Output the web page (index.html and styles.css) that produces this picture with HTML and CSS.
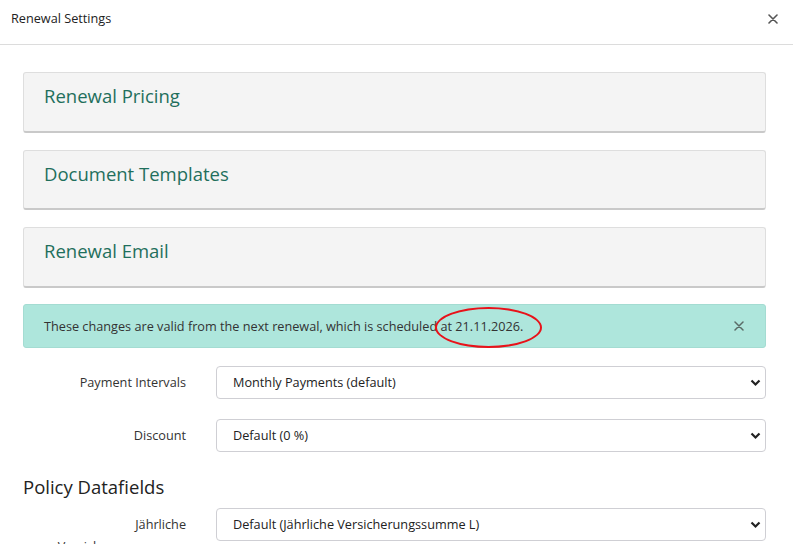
FILE: index.html
```html
<!DOCTYPE html>
<html lang="en">
<head>
<meta charset="utf-8">
<title>Renewal Settings</title>
<link rel="stylesheet" href="styles.css">
</head>
<body>
<div class="modal">
  <header class="modal-header">
    <span class="modal-title">Renewal Settings</span>
    <button class="close" aria-label="Close">
      <svg width="10" height="10" viewBox="0 0 10 10"><path d="M1 1L9 9M9 1L1 9" stroke="#555" stroke-width="1.6" stroke-linecap="round"/></svg>
    </button>
  </header>
  <main class="modal-body">
    <section class="panel"><h2 class="panel-title">Renewal Pricing</h2></section>
    <section class="panel"><h2 class="panel-title">Document Templates</h2></section>
    <section class="panel"><h2 class="panel-title">Renewal Email</h2></section>

    <div class="alert">
      <span class="alert-text">These changes are valid from the next renewal, which is scheduled at 21.11.2026.</span>
      <button class="alert-close" aria-label="Close">
        <svg width="10" height="10" viewBox="0 0 10 10"><path d="M1 1L9 9M9 1L1 9" stroke="#5a6b67" stroke-width="1.5" stroke-linecap="round"/></svg>
      </button>
      <span class="mark"></span>
    </div>

    <div class="form-row">
      <label class="form-label">Payment Intervals</label>
      <div class="select-wrap">
        <select class="select"><option>Monthly Payments (default)</option></select>
        <svg class="chev" width="11" height="8" viewBox="0 0 11 8"><path d="M1.5 1.5L5.5 5.5L9.5 1.5" fill="none" stroke="#222" stroke-width="2.2"/></svg>
      </div>
    </div>
    <div class="form-row">
      <label class="form-label">Discount</label>
      <div class="select-wrap">
        <select class="select"><option>Default (0 %)</option></select>
        <svg class="chev" width="11" height="8" viewBox="0 0 11 8"><path d="M1.5 1.5L5.5 5.5L9.5 1.5" fill="none" stroke="#222" stroke-width="2.2"/></svg>
      </div>
    </div>

    <h3 class="section-title">Policy Datafields</h3>

    <div class="form-row">
      <label class="form-label">Jährliche Versicherungssumme</label>
      <div class="select-wrap">
        <select class="select"><option>Default (Jährliche Versicherungssumme L)</option></select>
        <svg class="chev" width="11" height="8" viewBox="0 0 11 8"><path d="M1.5 1.5L5.5 5.5L9.5 1.5" fill="none" stroke="#222" stroke-width="2.2"/></svg>
      </div>
    </div>
  </main>
</div>
</body>
</html>
```
FILE: styles.css
```css
* { box-sizing: border-box; }
html, body { margin: 0; padding: 0; background: #fff; }
body {
  font-family: "Open Sans", "DejaVu Sans", sans-serif;
  font-size: 12.7px;
  color: #333;
  overflow: hidden;
  height: 544px;
}
.modal { width: 793px; }
.modal-header {
  height: 45px;
  border-bottom: 1px solid #dcdcdc;
  display: flex;
  align-items: center;
  justify-content: space-between;
  padding: 0 15px 0 11px;
}
.modal-title { font-size: 12.7px; color: #222; margin-top: -8px; }
.close, .alert-close {
  background: none; border: 0; padding: 0; cursor: pointer;
  display: flex; align-items: center; justify-content: center;
}
.close { margin-top: -7px; }
.modal-body { padding: 27px 27px 0 23px; }
.panel {
  background: #f4f4f4;
  border: 1px solid #dedede;
  border-bottom: 2px solid #c9c9c9;
  border-radius: 3px;
  height: 60.5px;
  padding: 11px 20px 0;
  margin-bottom: 17px;
}
.panel-title {
  margin: 0;
  font-size: 18.5px;
  font-weight: 400;
  line-height: 24px;
  color: #1f6f5c;
}
.alert {
  position: relative;
  background: #aee6dc;
  border: 1px solid #a4dcd2;
  border-radius: 3px;
  height: 44px;
  display: flex;
  align-items: center;
  justify-content: space-between;
  padding: 0 21px 0 20px;
  margin-top: -1px;
  margin-bottom: 18px;
}
.alert-text { font-size: 12.7px; color: #333; }
.mark {
  position: absolute;
  left: 411px; top: 2px;
  width: 107px; height: 41px;
  border: 2px solid #e8121a;
  border-radius: 50%;
  pointer-events: none;
}
.form-row {
  display: grid;
  grid-template-columns: 163px 1fr;
  column-gap: 30px;
  align-items: start;
  margin-bottom: 20px;
}
.form-label {
  text-align: right;
  font-size: 12.7px;
  color: #333;
  line-height: 22px;
  padding-top: 5px;
}
.select-wrap { position: relative; }
.select {
  -webkit-appearance: none;
  appearance: none;
  width: 100%;
  height: 33px;
  border: 1px solid #cfcfd4;
  border-radius: 4px;
  background: #fff;
  font-family: "Open Sans", "DejaVu Sans", sans-serif;
  font-size: 12.7px;
  color: #222;
  padding: 0 30px 0 16px;
  margin: 0;
}
.chev {
  position: absolute;
  right: 5px;
  top: 13px;
  pointer-events: none;
}
.section-title {
  margin: 22px 0 8px;
  font-size: 18.5px;
  font-weight: 400;
  line-height: 26px;
  color: #222;
}
```
